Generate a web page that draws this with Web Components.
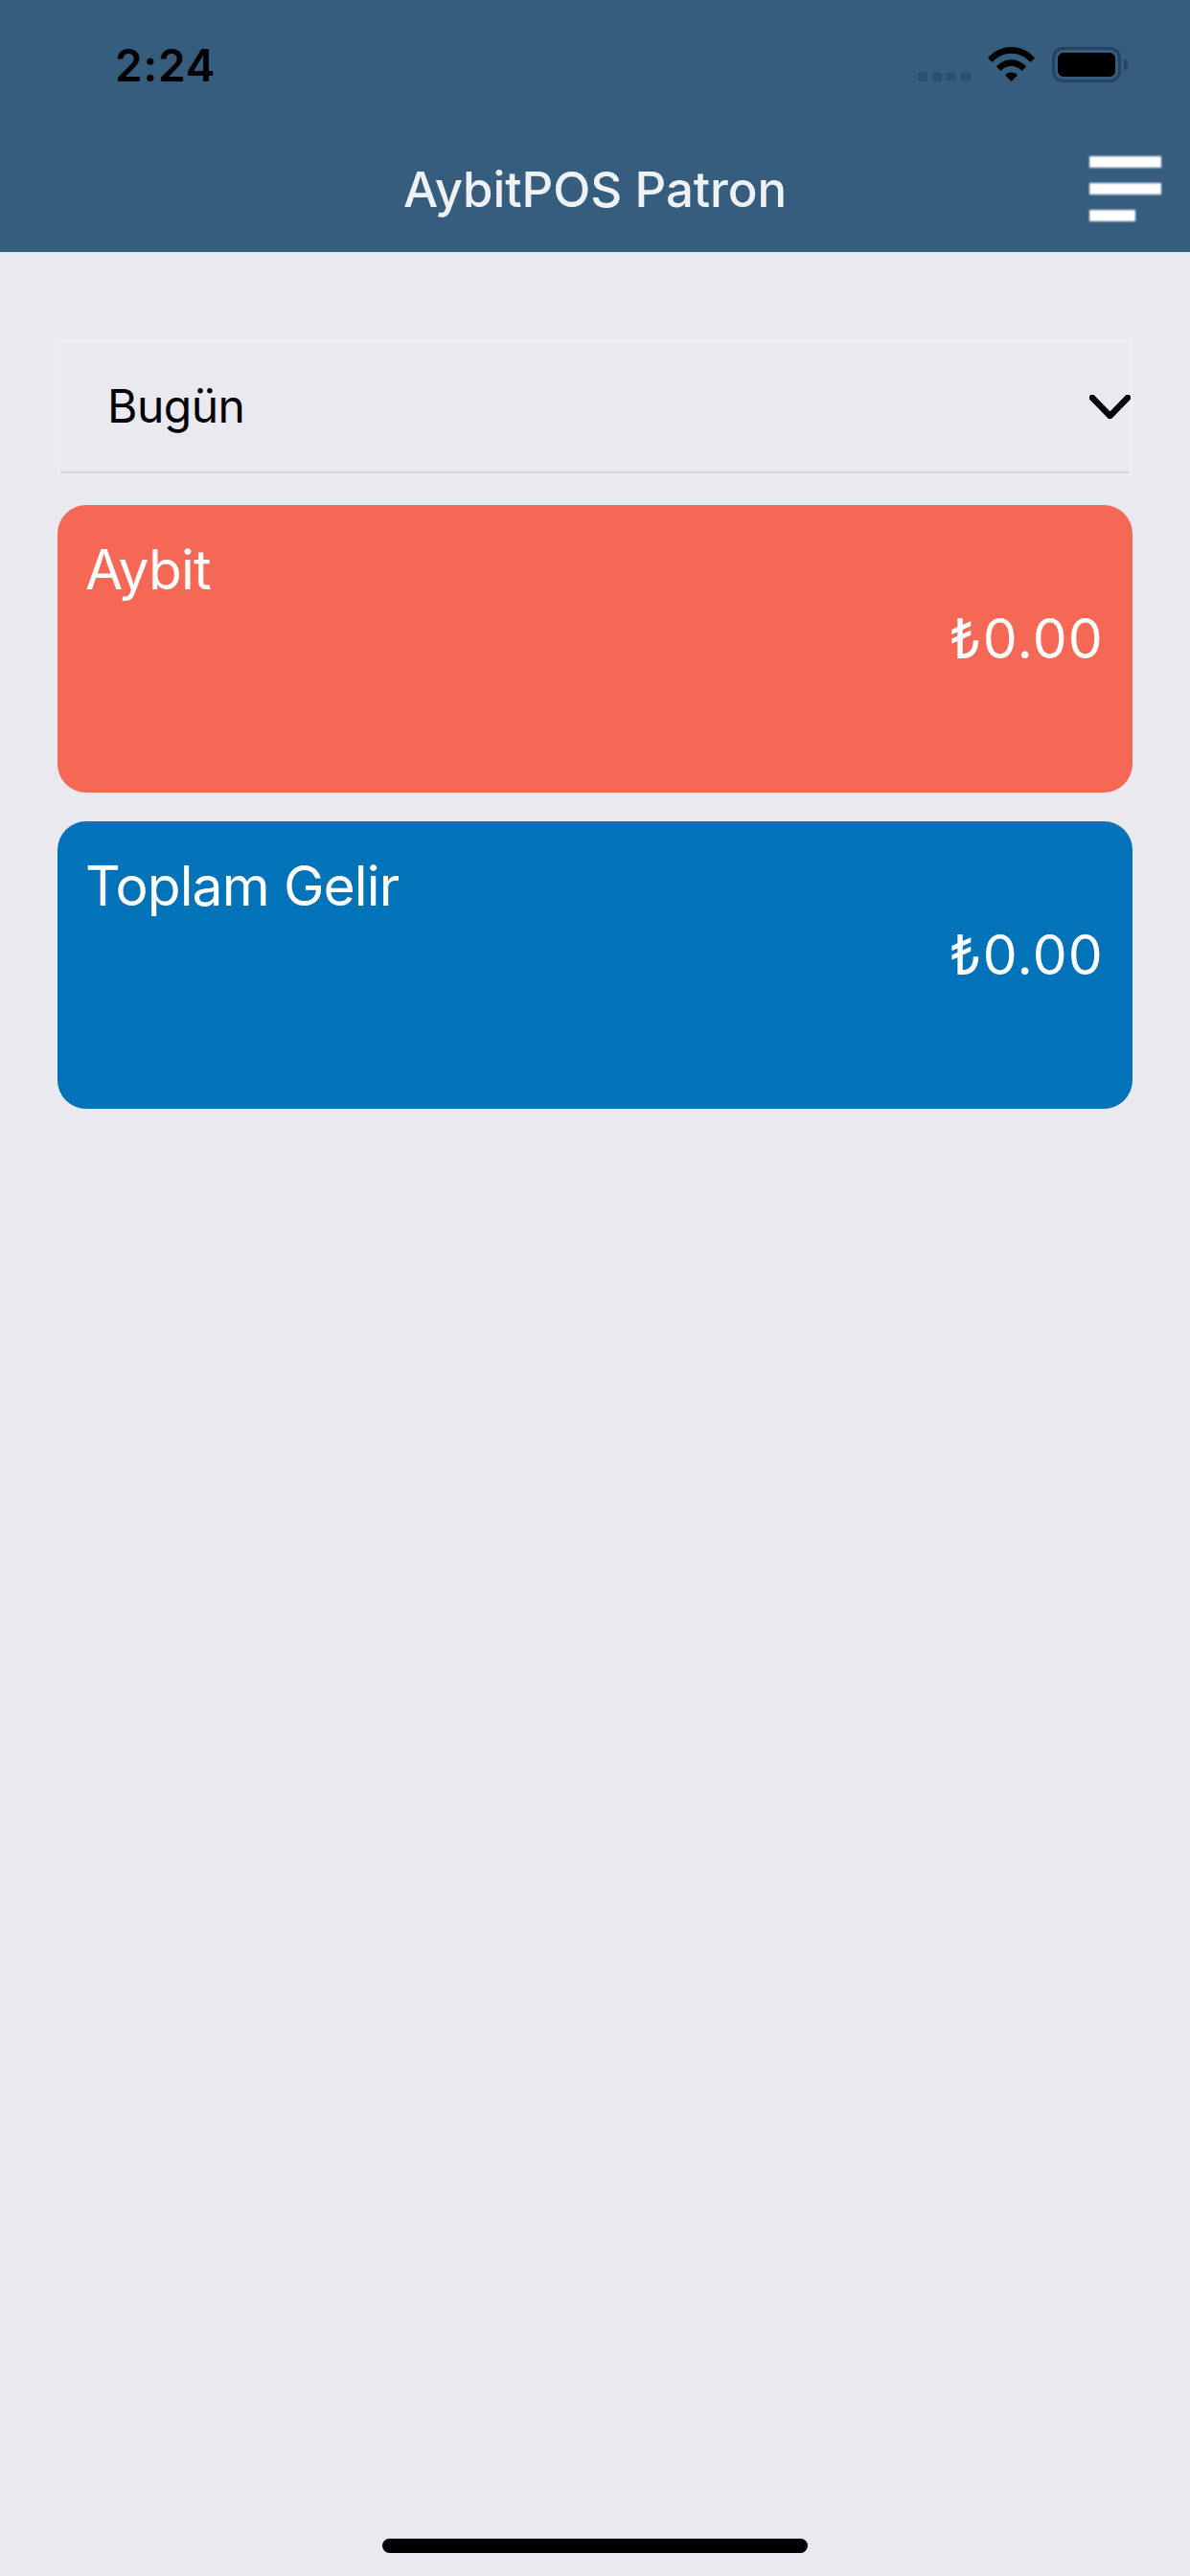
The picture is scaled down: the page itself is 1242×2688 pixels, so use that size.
<!DOCTYPE html>
<html lang="tr"><head><meta charset="utf-8"><title>AybitPOS Patron</title>
<style>
html,body{margin:0;padding:0}
body{width:1242px;height:2688px;background:#e9e9ef;font-family:Inter,"Liberation Sans",sans-serif;overflow:hidden}
</style></head><body>
<app-shell>
  <app-header slot="header" title-text="AybitPOS Patron" time="2:24"></app-header>
  <period-select>Bugün</period-select>
  <amount-card color="#f66856" label="Aybit" amount="₺0.00"></amount-card>
  <amount-card color="#0273b8" label="Toplam Gelir" amount="₺0.00"></amount-card>
</app-shell>
<script>
function def(name, html){
  customElements.define(name, class extends HTMLElement{
    connectedCallback(){
      if(this.shadowRoot) return;
      const r=this.attachShadow({mode:'open'});
      r.innerHTML=typeof html==='function'?html(this):html;
    }
  });
}
def('app-shell',`<style>
:host{display:flex;flex-direction:column;width:1242px;height:2688px}
main{flex:1;display:flex;flex-direction:column;gap:30px;padding:91px 60px 0}
footer{height:39px;display:flex;justify-content:center;align-items:flex-start}
i{display:block;width:444px;height:15px;border-radius:8px;background:#000}
</style><slot name="header"></slot><main><slot></slot></main><footer><i></i></footer>`);
def('app-header',h=>`<style>
:host{display:flex;flex-direction:column;height:263px;background:#365c7e;box-sizing:border-box}
.status{height:131px;display:flex;box-sizing:border-box;padding:0 65px 0 120px;justify-content:space-between;align-items:flex-start}
.time{font:600 46px/1 Inter,sans-serif;color:#000;margin-top:45px;letter-spacing:.8px}
svg{display:block}
.nav{flex:1;display:grid;grid-template-columns:1fr auto 1fr;padding:0 30px}
.title{font:500 51px/1 Inter,sans-serif;color:#eef2f4;margin-top:41px;letter-spacing:-.1px}
.menu{justify-self:end;display:flex;flex-direction:column;gap:16px;margin-top:32px;width:75px}
.menu b{display:block;height:12px;background:#fff;filter:blur(.9px)}
.menu b:last-child{width:48px}
</style>
<div class="status"><span class="time">${h.getAttribute('time')}</span>
<svg width="219" height="60" viewBox="958 30 219 60" style="margin-top:30px">
<g fill="#2d4f6e"><rect x="958" y="75" width="10" height="10" rx="2.5"/><rect x="973" y="75" width="10" height="10" rx="2.5"/><rect x="988" y="75" width="10" height="10" rx="2.5"/><rect x="1003" y="75" width="10" height="10" rx="2.5"/></g>
<path fill="#000" d="M1031 60.500C1037.500 53 1046 49 1055.500 49C1065 49 1073.500 53 1080 60.500L1075.500 65C1070 59 1063 55.700 1055.500 55.700C1048 55.700 1041 59 1035.500 65Z"/>
<path fill="#000" d="M1040 69.500C1044 65 1049.500 62.300 1055.500 62.300C1061.500 62.300 1067 65 1071 69.500L1066.500 74C1063.500 70.800 1059.700 69 1055.500 69C1051.300 69 1047.500 70.800 1044.500 74Z"/>
<path fill="#000" d="M1049 78.500C1050.700 76.700 1053 75.600 1055.500 75.600C1058 75.600 1060.300 76.700 1062 78.500L1055.500 85Z"/>
<rect x="1099.500" y="50.500" width="69" height="34" rx="10" fill="none" stroke="#24435f" stroke-width="3"/>
<rect x="1104" y="55" width="60" height="25" rx="6" fill="#000"/>
<path fill="#24435f" d="M1173 61C1175.500 62 1177 64.500 1177 67.500C1177 70.500 1175.500 73 1173 74Z"/>
</svg></div>
<div class="nav"><span></span><span class="title">${h.getAttribute('title-text')}</span><div class="menu"><b></b><b></b><b></b></div></div>`);
def('period-select',`<style>
:host{display:block;height:143px;box-sizing:border-box;border:3px solid #eeeef1;color:#000}
.in{height:137px;box-sizing:border-box;border-bottom:2px solid #d5d5db;display:flex;align-items:center;justify-content:space-between;padding:0 0 0 49px}
.t{font:400 48px/1 Inter,sans-serif;margin-top:-2px;letter-spacing:-.5px}
svg{display:block;margin:0 -1px 0 0}
</style><div class="in"><span class="t"><slot></slot></span>
<svg width="43" height="25" viewBox="0 0 43 25"><path d="M3 3L21.500 22L40 3" fill="none" stroke="#000" stroke-width="6.500" stroke-linecap="round" stroke-linejoin="round"/></svg></div>`);
def('amount-card',h=>`<style>
:host{display:flex;flex-direction:column;height:300px;box-sizing:border-box;border-radius:30px;background:${h.getAttribute('color')};color:#fff;padding:39px 30px 0 29px}
.l{font:400 57px/1 Inter,sans-serif;letter-spacing:-.9px}
.a{font:400 57px/1 Inter,sans-serif;text-align:right;margin-top:15px;letter-spacing:1.2px}
</style><div class="l">${h.getAttribute('label')}</div><div class="a">${h.getAttribute('amount')}</div>`);
</script>
</body></html>
